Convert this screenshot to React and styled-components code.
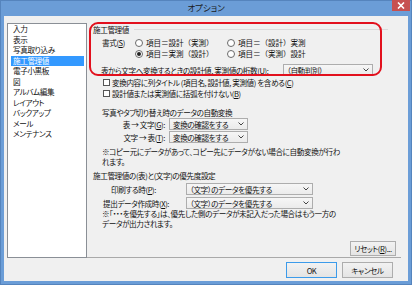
import React from 'react';
import styled, { createGlobalStyle } from 'styled-components';

const Global = createGlobalStyle`
  html, body { margin: 0; padding: 0; background: #fff; }
  body { font-family: "Noto Sans CJK JP", "Noto Sans", sans-serif; }
`;

const Window = styled.div`
  width: 412px;
  height: 285px;
  box-sizing: border-box;
  background: #6b9dd7;
  box-shadow: inset 0 0 0 1px #5584bd;
  display: flex;
  flex-direction: column;
  font-family: "Noto Sans CJK JP", sans-serif;
  font-size: 7.6px;
  letter-spacing: -0.4px;
  color: #111;
  font-feature-settings: "palt";
  overflow: hidden;
`;

const TitleBar = styled.div`
  height: 16px;
  flex: none;
  display: grid;
  grid-template-columns: 1fr auto 1fr;
  align-items: start;
`;

const Title = styled.div`
  grid-column: 2;
  font-size: 8.5px;
  line-height: 15px;
  color: #1a1a1a;
  letter-spacing: 0;
`;

const CloseButton = styled.div`
  grid-column: 3;
  justify-self: end;
  width: 18px;
  height: 11px;
  margin-right: 2px;
  background: #c75050;
  display: flex;
  align-items: center;
  justify-content: center;
`;

const Client = styled.div`
  flex: 1;
  margin: 0 4px 4px 4px;
  background: #f0f0f0;
  display: flex;
  flex-direction: column;
`;

const Main = styled.div`
  display: flex;
  padding: 7px 7px 0 3px;
`;

const ListBox = styled.div`
  box-sizing: border-box;
  width: 80px;
  height: 235px;
  border: 1px solid #8a8f96;
  background: #fff;
  padding: 0 2px 0 3px;
  display: flex;
  flex-direction: column;
`;

const ListItem = styled.div`
  height: 10.5px;
  line-height: 10.5px;
  padding-left: 2px;
  white-space: nowrap;
  background: ${p => (p.$selected ? '#3399ff' : 'transparent')};
  color: ${p => (p.$selected ? '#fff' : '#111')};
`;

const Panel = styled.div`
  position: relative;
  flex: 1;
  box-sizing: border-box;
  height: 235px;
  border-bottom: 1px solid #a9a9a9;
  padding: 1px 5px 1px 6px;
  display: flex;
  flex-direction: column;
`;

const Annotation = styled.div`
  position: absolute;
  left: 2px;
  top: -1px;
  width: 293px;
  height: 54px;
  box-sizing: border-box;
  border: 2px solid #e2101d;
  border-radius: 9px;
  pointer-events: none;
`;

const GroupHeader = styled.div`
  height: 11px;
  display: flex;
  align-items: center;
  gap: 5px;
  margin-right: 8px;
  white-space: nowrap;
`;

const GroupLine = styled.div`
  flex: 1;
  height: 1px;
  background: #dadada;
`;

const RadioGrid = styled.div`
  display: grid;
  grid-template-columns: 33px 92px auto;
  grid-auto-rows: 11px;
  align-items: center;
  padding-left: 9px;
  margin-top: 2px;
  white-space: nowrap;
`;

const Option = styled.div`
  display: flex;
  align-items: center;
  gap: 2px;
  grid-column: ${p => p.$col};
  font-feature-settings: normal;
  letter-spacing: -0.1px;
`;

const RadioCircle = styled.span`
  box-sizing: border-box;
  width: 8px;
  height: 8px;
  border-radius: 50%;
  border: 1px solid #6a6a6a;
  background: #fff;
  display: flex;
  align-items: center;
  justify-content: center;
  margin-right: 1px;
  &::after {
    content: '';
    width: 4px;
    height: 4px;
    border-radius: 50%;
    background: ${p => (p.$checked ? '#222' : 'transparent')};
  }
`;

const Row = styled.div`
  display: flex;
  align-items: center;
  height: ${p => p.$h || 11}px;
  margin-top: ${p => p.$mt || 0}px;
  padding-left: ${p => p.$indent || 0}px;
  white-space: nowrap;
`;

const Label = styled.span`
  flex: none;
  width: ${p => (p.$w ? `${p.$w}px` : 'auto')};
  text-align: ${p => p.$align || 'left'};
  padding-right: ${p => p.$pr || 0}px;
  box-sizing: border-box;
`;

const Select = styled.div`
  box-sizing: border-box;
  flex: none;
  width: ${p => p.$w}px;
  height: 12px;
  border: 1px solid #adadad;
  background: linear-gradient(#f6f6f6, #ebebeb);
  display: flex;
  align-items: center;
  justify-content: space-between;
  padding: 0 3px 0 ${p => p.$pl || 3}px;
`;

const CheckBox = styled.span`
  box-sizing: border-box;
  width: 7px;
  height: 7px;
  border: 1px solid #555;
  background: #fff;
  margin-right: 2px;
  flex: none;
`;

const Note = styled.div`
  margin-top: ${p => p.$mt || 0}px;
  padding-left: 9px;
  line-height: 9.5px;
  white-space: nowrap;
`;

const PanelFooter = styled.div`
  margin-top: auto;
  display: flex;
  justify-content: flex-end;
`;

const Button = styled.div`
  box-sizing: border-box;
  width: ${p => p.$w}px;
  height: ${p => p.$h || 16}px;
  border: 1px solid ${p => (p.$default ? '#3c9bea' : '#adadad')};
  background: linear-gradient(#f2f2f2, #e4e4e4);
  display: flex;
  align-items: center;
  justify-content: center;
  white-space: nowrap;
`;

const Footer = styled.div`
  display: flex;
  justify-content: flex-end;
  gap: 5px;
  padding: 4px 15px 0 0;
`;

const Chevron = () => (
  <svg width="6" height="4" viewBox="0 0 6 4">
    <polyline points="0.5,0.5 3,3 5.5,0.5" fill="none" stroke="#444" strokeWidth="1" />
  </svg>
);

const listItems = ['入力', '表示', '写真取り込み', '施工管理値', '電子小黒板', '図', 'アルバム編集', 'レイアウト', 'バックアップ', 'メール', 'メンテナンス'];

export default function App() {
  return (
    <>
      <Global />
      <Window>
        <TitleBar>
          <Title>オプション</Title>
          <CloseButton>
            <svg width="8" height="7" viewBox="0 0 8 7">
              <path d="M1 0.5 L7 6.5 M7 0.5 L1 6.5" stroke="#fff" strokeWidth="1.6" />
            </svg>
          </CloseButton>
        </TitleBar>
        <Client>
          <Main>
            <ListBox>
              {listItems.map(t => (
                <ListItem key={t} $selected={t === '施工管理値'}>{t}</ListItem>
              ))}
            </ListBox>
            <Panel>
              <Annotation />
              <GroupHeader>
                <span>施工管理値</span>
                <GroupLine />
              </GroupHeader>
              <RadioGrid>
                <span>書式(<u>S</u>)</span>
                <Option $col={2}><RadioCircle />項目＝設計（実測）</Option>
                <Option $col={3}><RadioCircle />項目＝（設計）実測</Option>
                <Option $col={2}><RadioCircle $checked />項目＝実測（設計）</Option>
                <Option $col={3}><RadioCircle />項目＝（実測）設計</Option>
              </RadioGrid>
              <Row $h={12} $mt={5} $indent={8}>
                <Label $w={182}>表から文字へ変換するときの設計値, 実測値の桁数(<u>U</u>):</Label>
                <Select $w={90}>（自動判別）<Chevron /></Select>
              </Row>
              <Row $mt={1} $indent={10}>
                <CheckBox />変換内容に列タイトル (項目名, 設計値, 実測値) を含める(<u>C</u>)
              </Row>
              <Row $indent={10}>
                <CheckBox />設計値または実測値に括弧を付けない(<u>B</u>)
              </Row>
              <Row $mt={8} $indent={9}>写真やタブ切り替え時のデータの自動変換</Row>
              <Row $h={12} $indent={9}>
                <Label $w={67} $align="right" $pr={4}>表 → 文字(<u>G</u>):</Label>
                <Select $w={79}>変換の確認をする<Chevron /></Select>
              </Row>
              <Row $h={12} $mt={1} $indent={9}>
                <Label $w={67} $align="right" $pr={4}>文字 → 表(<u>T</u>):</Label>
                <Select $w={79}>変換の確認をする<Chevron /></Select>
              </Row>
              <Note $mt={4}>
                ※コピー元にデータがあって、コピー先にデータがない場合に自動変換が行わ<br />れます。
              </Note>
              <Row $mt={4}>施工管理値の(表)と(文字)の優先度設定</Row>
              <Row $h={12} $mt={2} $indent={18}>
                <Label $w={75}>印刷する時(<u>P</u>):</Label>
                <Select $w={127}>（文字）のデータを優先する<Chevron /></Select>
              </Row>
              <Row $h={12} $mt={2} $indent={10}>
                <Label $w={83}>提出データ作成時(<u>X</u>):</Label>
                <Select $w={127}>（文字）のデータを優先する<Chevron /></Select>
              </Row>
              <Note>
                ※「・・・を優先する」は、優先した側のデータが未記入だった場合はもう一方の<br />データが出力されます。
              </Note>
              <PanelFooter>
                <Button $w={46} $h={15}>リセット(<u>R</u>)...</Button>
              </PanelFooter>
            </Panel>
          </Main>
          <Footer>
            <Button $w={51} $default>OK</Button>
            <Button $w={51}>キャンセル</Button>
          </Footer>
        </Client>
      </Window>
    </>
  );
}
